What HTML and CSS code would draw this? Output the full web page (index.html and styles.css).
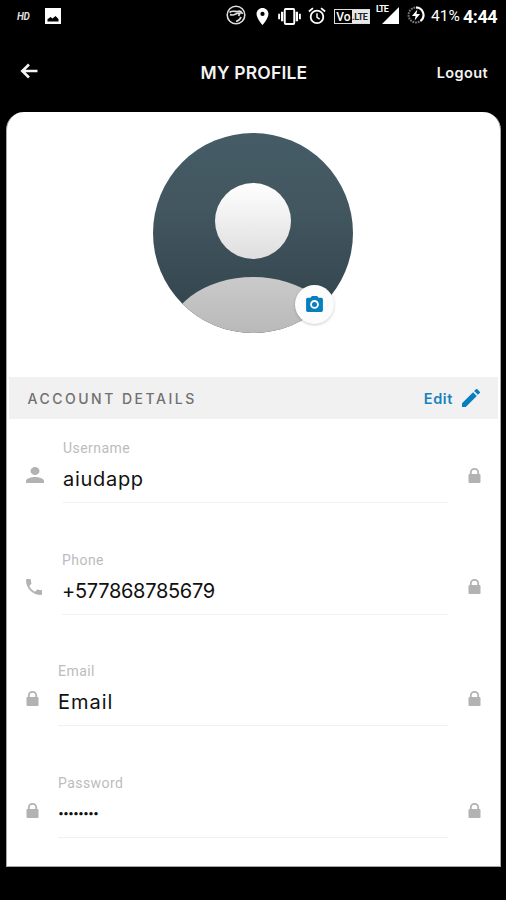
FILE: index.html
```html
<!DOCTYPE html>
<html lang="en">
<head>
<meta charset="utf-8">
<title>My Profile</title>
<link rel="stylesheet" href="styles.css">
</head>
<body>
<svg width="0" height="0" class="defs">
  <symbol id="lock" viewBox="0 0 13 15"><path d="M1.500 6h10q1 0 1 1v7q0 1-1 1h-10q-1 0-1-1V7q0-1 1-1z"/><path fill="none" stroke="#b2b2b2" stroke-width="1.800" d="M2.800 7V4.600a3.700 3.700 0 017.400 0V7"/></symbol>
</svg>
<div class="status">
  <span class="hd">HD</span>
  <svg class="photo" viewBox="0 0 16 16"><path fill="#fff" d="M0 0h16v16H0z"/><path d="M2.500 13.500v-2.300l3-2.200 2 1.500 3-2.500 3 3v2.500z"/></svg>
  <svg class="globe" viewBox="0 0 20 20" fill="none" stroke="#ddd"><circle cx="10" cy="10" r="8.800" stroke-width="1.600"/><path stroke-width="1.700" d="M3.500 7.500c3-2.500 6-.5 8-1 2-.8 4 .2 5 2.500M4 9.500c4 2 6-1.500 9-1.500M14.500 7l-2 4M15 12c-1 3-3 4-5 4.500"/></svg>
  <svg class="pin" viewBox="5 2 14 20"><path fill="#fff" d="M12 2C8.130 2 5 5.130 5 9c0 5.250 7 13 7 13s7-7.750 7-13c0-3.870-3.130-7-7-7zm0 9.500a2.500 2.500 0 110-5 2.500 2.500 0 010 5z"/></svg>
  <svg class="vibrate" viewBox="0 0 24 18" fill="#fff"><path d="M0 6h2v6H0zM3 4h2.500v10H3zM18.500 4H21v10h-2.500zM22 6h2v6h-2z"/><rect x="7" y="1" width="10" height="16" rx="1" fill="none" stroke="#fff" stroke-width="2"/></svg>
  <svg class="alarm" viewBox="0 0 20 20" fill="none" stroke="#fff" stroke-width="2"><circle cx="10" cy="11" r="7"/><path d="M1 5l4.500-3.700M19 5l-4.500-3.700"/><path stroke-width="1.600" d="M10 7v4.500l3 2"/></svg>
  <span class="volte"><b>Vo</b><i>.LTE</i></span>
  <span class="signal"><em>LTE</em><svg viewBox="0 0 17 17"><path fill="#fff" d="M17 0v17H0z"/></svg></span>
  <svg class="battery" viewBox="0 0 20 20" fill="none" stroke-width="2.200"><circle cx="10" cy="10" r="8.300" stroke="#777" stroke-dasharray="2 1"/><path stroke="#fff" d="M10 1.700A8.300 8.300 0 0115 16.600"/><path fill="#fff" d="M11.500 4L5.500 11h4l-1 5 6-7h-4z"/></svg>
  <span class="percent">41%</span>
  <span class="clock">4:44</span>
</div>
<header class="header">
  <svg class="back" viewBox="0 0 18 16" fill="none" stroke="#f4f4f4" stroke-width="2.600"><path d="M9 1.500L2.300 8 9 14.500M2.500 8H17.500"/></svg>
  <h1>MY PROFILE</h1>
  <a class="logout">Logout</a>
</header>
<main class="card">
  <section class="hero">
    <div class="avatar">
      <svg viewBox="0 0 200 200">
        <defs>
          <linearGradient id="bg" x2="0" y2="1"><stop stop-color="#455c66"/><stop offset=".4" stop-color="#42565f"/><stop offset="1" stop-color="#304149"/></linearGradient>
          <linearGradient id="head" x2="0" y2="1"><stop stop-color="#fff"/><stop offset="1" stop-color="#dedede"/></linearGradient>
          <linearGradient id="body" x2="0" y2="1"><stop stop-color="#cacaca"/><stop offset=".6" stop-color="#b2b2b2"/></linearGradient>
          <clipPath id="round"><circle cx="100" cy="100" r="100"/></clipPath>
        </defs>
        <g clip-path="url(#round)">
          <path fill="url(#bg)" d="M0 0h200v200H0z"/>
          <ellipse cx="100" cy="210" rx="88" ry="66" fill="url(#body)"/>
        </g>
        <circle cx="100" cy="88" r="38" fill="url(#head)"/>
      </svg>
      <span class="camera"><svg viewBox="2 2 20 19"><path fill="#087fbd" d="M9 2L7.170 4H4c-1.100 0-2 .9-2 2v13c0 1.100.9 2 2 2h16c1.100 0 2-.9 2-2V6c0-1.100-.9-2-2-2h-3.170L15 2z"/><circle cx="12" cy="12" r="4.100" fill="none" stroke="#fff" stroke-width="2.200"/></svg></span>
    </div>
  </section>
  <div class="bar">
    <h2>ACCOUNT DETAILS</h2>
    <a class="edit">Edit</a>
    <svg class="pencil" viewBox="3 3 18 18"><path fill="#087fbd" d="M3 17.250V21h3.750L17.810 9.940l-3.750-3.750zM20.710 7.040a1 1 0 000-1.410l-2.340-2.340a1 1 0 00-1.410 0l-1.830 1.830 3.750 3.750z"/></svg>
  </div>
  <div class="row username">
    <svg class="person" viewBox="4 4 16 16" preserveAspectRatio="none"><path d="M12 12c2.210 0 4-1.790 4-4s-1.790-4-4-4-4 1.790-4 4 1.790 4 4 4zm0 2c-2.670 0-8 1.340-8 4v2h16v-2c0-2.660-5.330-4-8-4z"/></svg>
    <div class="field"><label>Username</label><span>aiudapp</span></div>
    <svg class="lock"><use href="#lock"/></svg>
  </div>
  <div class="row phone">
    <svg class="call" viewBox="3 3 18 18"><path d="M6.620 10.790c1.440 2.830 3.760 5.140 6.590 6.590l2.200-2.200c.27-.27.67-.36 1.020-.24 1.120.37 2.330.57 3.570.57.55 0 1 .45 1 1V20c0 .55-.45 1-1 1C10.610 21 3 13.390 3 4c0-.55.45-1 1-1h3.500c.55 0 1 .45 1 1 0 1.250.2 2.450.57 3.570.11.35.03.74-.25 1.020z"/></svg>
    <div class="field"><label>Phone</label><span>+577868785679</span></div>
    <svg class="lock"><use href="#lock"/></svg>
  </div>
  <div class="row email">
    <svg class="lock"><use href="#lock"/></svg>
    <div class="field"><label>Email</label><span>Email</span></div>
    <svg class="lock"><use href="#lock"/></svg>
  </div>
  <div class="row password">
    <svg class="lock"><use href="#lock"/></svg>
    <div class="field"><label>Password</label><span>••••••••</span></div>
    <svg class="lock"><use href="#lock"/></svg>
  </div>
</main>
</body>
</html>
```
FILE: styles.css
```css
* { box-sizing: border-box; }
body { margin: 0; width: 506px; height: 900px; background: #000; overflow: hidden; font-family: Inter, "Liberation Sans", sans-serif; }
svg { display: block; flex: none; }
.defs { position: absolute; }

.status { display: flex; align-items: center; height: 32px; padding-left: 17px; color: #fff; font-family: Roboto, sans-serif; }
.status > * { flex: none; }
.hd { width: 28px; font: italic 700 10px Roboto, sans-serif; letter-spacing: -.3px; color: #ddd; }
.photo { width: 16px; height: 16px; }
.globe { width: 20px; height: 20px; margin: -2px 0 0 165px; }
.pin { width: 13px; height: 17px; margin-left: 10px; }
.vibrate { width: 23px; height: 17px; margin-left: 9px; }
.alarm { width: 18px; height: 18px; margin-left: 7px; }
.volte { display: flex; width: 36px; height: 15px; margin-left: 8px; border: 1px solid #ddd; font-size: 12px; line-height: 14px; overflow: hidden; }
.volte b { width: 17px; text-align: center; font-weight: 500; }
.volte i { flex: 1; background: #e8e8e8; color: #222; font-style: normal; font-weight: 700; font-size: 9px; letter-spacing: -.4px; }
.signal { display: flex; position: relative; justify-content: flex-end; width: 24px; height: 20px; margin: -3px 0 0 5px; padding-top: 2px; }
.signal svg { width: 17px; height: 17px; }
.signal em { position: absolute; left: 1px; top: 0; font: 700 9px/9px Roboto, sans-serif; letter-spacing: -.9px; }
.battery { width: 18px; height: 18px; margin: -2px 0 0 8px; }
.percent { width: 32px; margin-left: 6px; font-size: 15.500px; }
.clock { font-size: 18px; font-weight: 700; letter-spacing: -.5px; }

.header { display: grid; grid-template-columns: 1fr auto 1fr; align-items: center; height: 80px; padding: 1px 18px 0 20px; color: #f4f4f4; }
.back { width: 18px; height: 16px; margin-top: -4px; }
h1 { margin: 0; font-size: 17.500px; font-weight: 600; letter-spacing: .2px; }
.logout { justify-self: end; font-size: 14.500px; font-weight: 600; letter-spacing: .4px; }

.card { width: 495px; height: 755px; margin-left: 6px; background: #fff; border: solid #a5a5a5; border-width: 0 1px 1px; border-radius: 18px 18px 0 0; overflow: hidden; }
.hero { height: 265px; padding: 20.500px 0 0 146px; }
.avatar { position: relative; width: 200px; height: 200px; }
.camera { position: absolute; left: 142px; top: 152px; display: grid; place-items: center; width: 39px; height: 39px; border-radius: 50%; background: #fcfcfc; box-shadow: 0 1px 3px #0003; }
.camera svg { width: 17px; height: 16px; }
.bar { display: flex; align-items: center; height: 42px; margin: 0 2px; padding: 0 18px 0 18.500px; background: #f1f1f1; }
h2 { flex: 1; margin: 1px 0 0; font-size: 14px; font-weight: 500; letter-spacing: 2.500px; color: #707070; }
.edit { margin: 1px 9px 0 0; font-size: 14.500px; font-weight: 600; letter-spacing: .6px; color: #1682bd; }
.pencil { width: 18px; height: 18px; }

.row { display: flex; height: 111.700px; padding: 0 19px; fill: #b2b2b2; }
.row > svg { margin-top: 48.500px; }
.row .lock { width: 13px; height: 15px; }
.row .person { width: 18px; height: 16px; margin-top: 48px; }
.row .call { width: 16px; height: 16px; margin-top: 48px; }
.field { width: 385px; height: 84px; margin-right: auto; margin-left: 19px; padding-top: 20px; border-bottom: 1px solid #f1f1f1; }
.phone .field { margin-left: 20px; width: 386px; }
.email .field, .password .field { margin-left: 19px; width: 390px; }
.field label { display: block; font: 14px/18px Roboto, sans-serif; color: #bcbcbc; letter-spacing: .45px; }
.field span { display: block; margin-top: 9px; font-size: 20px; line-height: 26px; color: #111; letter-spacing: .7px; }
.phone .field span { letter-spacing: -.3px; }
.email .field span { letter-spacing: 1px; }
.password .field span { font-size: 10.500px; letter-spacing: -.9px; }
```
